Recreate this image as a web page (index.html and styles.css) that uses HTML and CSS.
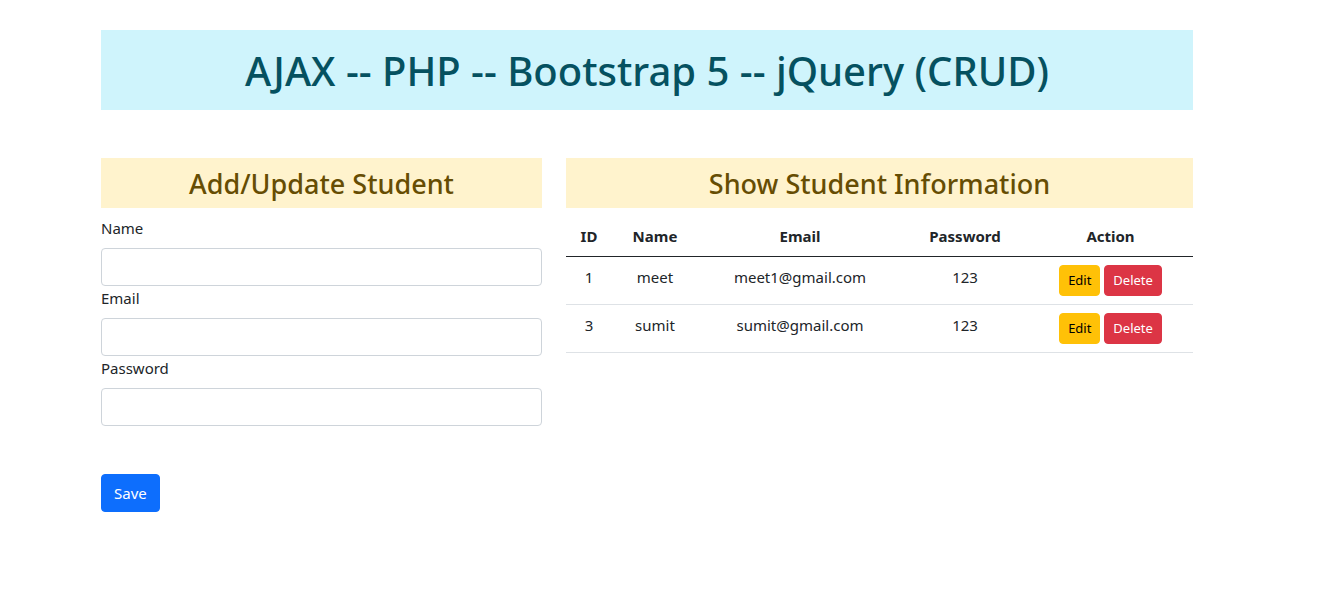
FILE: index.html
```html
<!DOCTYPE html>
<html lang="en">
<head>
<meta charset="utf-8">
<title>AJAX CRUD</title>
<link rel="stylesheet" href="styles.css">
</head>
<body>
<div class="container">
  <h1 class="banner">AJAX -- PHP -- Bootstrap 5 -- jQuery (CRUD)</h1>
  <div class="row">
    <div class="col-form">
      <h3 class="section-title">Add/Update Student</h3>
      <form class="student-form">
        <label class="field-label" for="name">Name</label>
        <input class="field-input" id="name" type="text">
        <label class="field-label" for="email">Email</label>
        <input class="field-input" id="email" type="email">
        <label class="field-label" for="password">Password</label>
        <input class="field-input" id="password" type="password">
        <button class="btn btn-primary save-btn" type="button">Save</button>
      </form>
    </div>
    <div class="col-table">
      <h3 class="section-title">Show Student Information</h3>
      <table class="student-table">
        <colgroup>
          <col class="c-id"><col class="c-name"><col class="c-email"><col class="c-pass"><col class="c-action">
        </colgroup>
        <thead>
          <tr><th>ID</th><th>Name</th><th>Email</th><th>Password</th><th>Action</th></tr>
        </thead>
        <tbody>
          <tr>
            <td>1</td><td>meet</td><td>meet1@gmail.com</td><td>123</td>
            <td><button class="btn btn-sm btn-warning">Edit</button> <button class="btn btn-sm btn-danger">Delete</button></td>
          </tr>
          <tr>
            <td>3</td><td>sumit</td><td>sumit@gmail.com</td><td>123</td>
            <td><button class="btn btn-sm btn-warning">Edit</button> <button class="btn btn-sm btn-danger">Delete</button></td>
          </tr>
        </tbody>
      </table>
    </div>
  </div>
</div>
</body>
</html>
```
FILE: styles.css
```css
* { box-sizing: border-box; }
html, body { margin: 0; padding: 0; background: #fff; }
body {
  font-family: "Noto Sans", "Open Sans", sans-serif;
  font-size: 16px;
  line-height: 1.5;
  color: #212529;
}
.container {
  width: 1092px;
  margin-left: 101px;
  padding-top: 30px;
}
.banner {
  margin: 0;
  height: 80px;
  background: #cff4fc;
  color: #055160;
  font-size: 40px;
  font-weight: 500;
  line-height: 82px;
  text-align: center;
}
.row {
  display: flex;
  gap: 24px;
  margin-top: 48px;
}
.col-form { width: 441px; flex: none; }
.col-table { width: 627px; flex: none; }
.section-title {
  margin: 0 0 8px;
  height: 50px;
  background: #fff3cd;
  color: #664d03;
  font-size: 27px;
  font-weight: 500;
  line-height: 52px;
  text-align: center;
}
.student-form { display: flex; flex-direction: column; align-items: flex-start; }
.field-label { display: block; margin-bottom: 8px; font-size: 15px; line-height: 24px; }
.field-input {
  width: 100%;
  height: 38px;
  border: 1px solid #ced4da;
  border-radius: 4px;
  background: #fff;
  font: inherit;
  padding: 6px 12px;
}
.btn {
  display: inline-block;
  border: 1px solid transparent;
  border-radius: 4px;
  font-family: inherit;
  cursor: pointer;
}
.btn-primary {
  background: #0d6efd;
  border-color: #0d6efd;
  color: #fff;
  font-size: 15px;
  line-height: 24px;
  padding: 6px 12px;
}
.save-btn { margin-top: 48px; height: 38px; }
.btn-sm { font-size: 13px; line-height: 21px; padding: 4px 8px; height: 31px; }
.btn-warning { background: #ffc107; border-color: #ffc107; color: #000; }
.btn-danger { background: #dc3545; border-color: #dc3545; color: #fff; }
.student-table {
  width: 100%;
  border-collapse: collapse;
  table-layout: fixed;
  text-align: center;
  vertical-align: top;
  font-size: 15px;
}
.c-id { width: 46px; }
.c-name { width: 86px; }
.c-email { width: 204px; }
.c-pass { width: 126px; }
.c-action { width: 165px; }
.student-table th, .student-table td {
  padding: 8px;
  line-height: 24px;
  vertical-align: top;
  border-bottom: 1px solid #dee2e6;
}
.student-table th { font-weight: 700; border-bottom-color: #212529; }
```
